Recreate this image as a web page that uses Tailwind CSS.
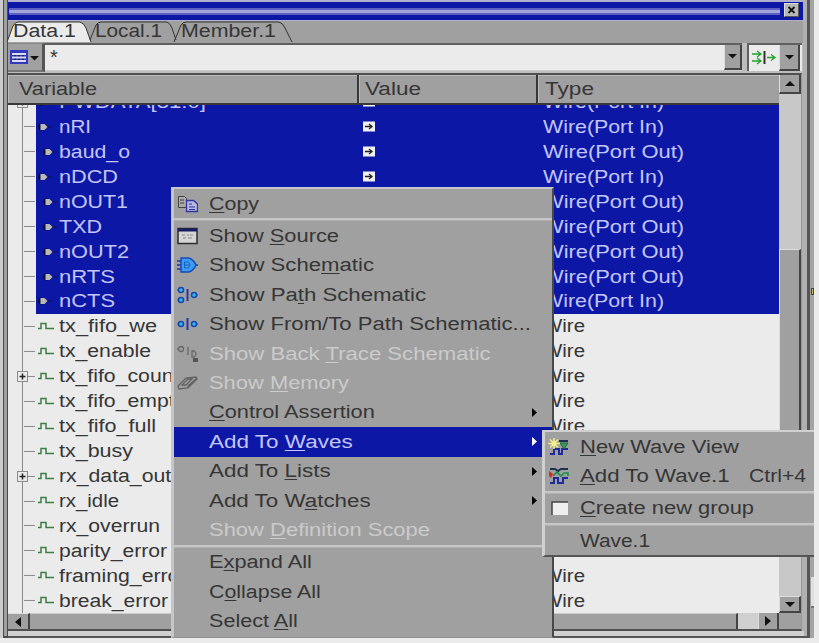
<!DOCTYPE html>
<html lang="en"><head><meta charset="utf-8"><title>Signal list</title>
<script src="https://cdn.jsdelivr.net/npm/@tailwindcss/browser@4"></script></head>
<body class="w-[819px] h-[643px] overflow-hidden bg-[#ebebeb] relative text-[18px] leading-none text-[#363636] [font-family:'Liberation_Sans',Arial,sans-serif]">
<div class="flex w-[814px] h-[638px] bg-[#b0b0b0]">
  <div class="w-[3px] bg-[#cccccc]"></div>
  <div class="w-[5px] bg-[#a0a0a0] border-x border-b-2 border-[#4a4a4a]"></div>
  <div class="w-[799px] flex flex-col border-b-2 border-[#555]">
    <header class="h-[21px] shrink-0 flex bg-[#0d17a5] border-t-2 border-b border-[#b0b0cc] w-[795px] pl-px">
      <div class="mt-[6px] h-[7px] w-[771px] bg-[#a3a6dc] border-y-2 border-[#5a5fc0]"></div>
      <button class="ml-[4px] mt-px w-[15px] h-[14px] bg-[#b8b8b8] border border-t-[#ddd] border-l-[#ddd] border-r-[#555] border-b-[#555] flex items-center justify-center">
        <svg width="9" height="8" viewBox="0 0 9 8"><path d="M1.5 1l6 6M7.5 1l-6 6" stroke="#111" stroke-width="1.8"/></svg></button>
    </header>
    <nav class="h-[22px] shrink-0 bg-[#a0a0a0] relative w-[795px] flex items-start pt-px">
      <svg class="absolute left-[-2px] top-0" width="292" height="22" viewBox="6 21 292 22" fill="none" stroke="#333">
        <path d="M7 42L13 26Q15 22 18 22H80Q84 23 86 28L91 42" fill="#ebebeb"/>
        <path d="M90 40L96 25Q98 22 101 22H167Q170 23 172 28L176 40M174 42L181 25Q183 22 186 22H279Q283 23 285 28L292 42"/></svg>
      <span class="relative ml-[5px] w-[82px]"><span data-w="63">Data.1</span></span>
      <span class="relative w-[86px]"><span data-w="67">Local.1</span></span>
      <span class="relative"><span data-w="95">Member.1</span></span>
    </nav>
    <div class="h-[30px] shrink-0 w-[795px] flex bg-[#bdbdbd]">
      <button class="w-[37px] h-[29px] bg-[#a0a0a0] border-t border-[#888] border-r-3 border-r-[#555] border-b-2 border-b-[#777] flex items-center pl-[2px]">
        <svg width="30" height="15" viewBox="0 0 30 15"><rect width="18" height="14" fill="#3139bd"/><path d="M2 4h14M2 7.5h14M2 11h14" stroke="#dcdcf5" stroke-width="2"/><path d="M4 5.7h2M8 5.7h2M12 5.7h2M4 9.3h2M8 9.3h2M12 9.3h2" stroke="#222"/><path d="M20 6h9l-4.500 4.500z" fill="#111"/></svg></button>
      <div class="w-[697px] h-[28px] flex border-t-2 border-[#606060] bg-[#ebebeb] border-b border-b-[#ccc]">
        <span class="w-[679px] pl-[5px] pt-[2px] text-[20px]">*</span>
        <button class="w-[18px] bg-[#a0a0a0] border-l border-[#ddd] border-r-2 border-r-[#444] border-b-2 border-b-[#444] flex items-center justify-center"><svg width="9" height="5"><path d="M0 0h9l-4.500 4.500z" fill="#111"/></svg></button>
      </div>
      <div class="w-[55px] ml-[5px] h-[28px] flex bg-[#ebebeb] border-t-2 border-l-2 border-[#606060]">
        <svg class="ml-[3px] mt-[5px]" width="25" height="15" viewBox="0 0 25 15" fill="none" stroke="#22a32b" stroke-width="1.3"><path d="M0 4h9M0 11h9M5 1l4 3-4 3M5 8l4 3-4 3M15 7.500h8M19 4.500l4 3-4 3"/><path d="M12.500 1v13" stroke="#333" stroke-width="2"/></svg>
        <button class="ml-[2px] w-[21px] bg-[#a0a0a0] border-l border-[#ddd] border-r-2 border-r-[#444] border-b-2 border-b-[#444] flex items-center justify-center"><svg width="9" height="5"><path d="M0 0h9l-4.500 4.500z" fill="#111"/></svg></button>
      </div>
    </div>
    <div class="h-[558px] w-[794px] shrink-0 flex flex-col border-t-2 border-b-2 border-[#505050] border-r border-r-[#999]">
      <div class="h-[538px] flex">
        <div class="w-[771px] flex flex-col">
          <div class="h-[30px] flex bg-[#a0a0a0] border-b-2 border-[#383838] shrink-0">
            <div class="w-[351px] border-r-2 border-[#383838] pl-[11px] pt-[5px] shadow-[inset_1px_1px_#bbb]"><span data-w="78">Variable</span></div>
            <div class="w-[179px] border-r-2 border-[#383838] pl-[6px] pt-[5px] shadow-[inset_1px_1px_#bbb]"><span data-w="56">Value</span></div>
            <div class="grow pl-[7px] pt-[5px] shadow-[inset_1px_1px_#bbb]"><span data-w="49">Type</span></div>
          </div>
          <div class="h-[508px] overflow-hidden bg-[#ebebeb]"><div id="rows" class="mt-[-15.500px]"></div></div>
        </div>
        <div class="w-[22px] flex flex-col bg-[#c8c8c8]">
          <button class="h-[19px] bg-[#a0a0a0] border-l border-[#ddd] border-r-2 border-r-[#444] border-b-2 border-b-[#444] flex items-center justify-center"><svg width="10" height="5"><path d="M0 5h10l-5-5z" fill="#111"/></svg></button>
          <div class="grow pt-[155px]"><div class="h-full bg-[#a0a0a0] border-t border-l border-[#ddd] border-r-2 border-r-[#444]"></div></div>
          <div class="h-[39px] bg-[#c8c8c8]"></div>
          <button class="h-[17px] bg-[#a0a0a0] border-l border-t border-[#ddd] border-r-2 border-r-[#444] border-b-2 border-b-[#444] flex items-center justify-center"><svg width="10" height="5"><path d="M0 0h10l-5 5z" fill="#111"/></svg></button>
        </div>
      </div>
      <div class="h-[16px] flex bg-[#a0a0a0]">
        <button class="w-[22px] border-r-2 border-[#444] border-t border-t-[#ddd] flex items-center justify-center"><svg width="6" height="10"><path d="M6 0v10l-6-5z" fill="#111"/></svg></button>
        <div class="w-[708px] border-t border-[#ccc] border-r-2 border-r-[#444]"></div>
        <div class="w-[20px] bg-[#d0d0d0]"></div>
        <button class="w-[21px] border-r-2 border-[#444] border-l border-l-[#ddd] flex items-center justify-center"><svg width="6" height="10"><path d="M0 0v10l6-5z" fill="#111"/></svg></button>
      </div>
    </div>
    <div class="grow bg-[#d0d0d0] w-[796px]"></div>
  </div>
  <div class="w-[3px] bg-[#555]"></div><div class="w-[4px] bg-[#a4a4a4]"></div>
</div>
<div class="absolute left-[811px] top-[288px] w-[3px] h-[7px] bg-[#c5bc62] border border-[#444]"></div>
<div class="absolute left-[811px] top-[577px] w-[3px] h-[31px] bg-[#e0e0e0] border-b-2 border-[#777]"></div>

<section id="menu" class="absolute left-[171px] top-[187px] w-[383px] h-[451px] bg-[#a0a0a0] border-t-2 border-l-3 border-[#c5c5cc] border-r-2 border-r-[#484848] border-b border-b-[#909090]"></section>
<section id="sub" class="absolute left-[542px] top-[430px] w-[272px] h-[127px] bg-[#a0a0a0] border-t-2 border-l-3 border-[#d0d0d0] border-b-2 border-b-[#555]"></section>

<script>
const raw=(s,w)=>`<span ${w?`data-w="${w}"`:'data-s="1.18"'}>${s}</span>`;
const txt=(s,w)=>raw(s.replace(/_(\w)_/,'<u class="underline decoration-1 underline-offset-2">$1</u>'),w);
const rows=[['PWDATA[31:0]',147,'i'],['nRI',32,'i'],['baud_o',71,'o'],['nDCD',59,'i'],['nOUT1',69,'o'],['TXD',43,'o'],['nOUT2',70,'o'],['nRTS',56,'o'],['nCTS',56,'i'],
['tx_fifo_we',98],['tx_enable',92],['tx_fifo_count',0,'+'],['tx_fifo_empty',0],['tx_fifo_full',97],['tx_busy',74],['rx_data_out',0,'+'],['rx_idle',60],['rx_overrun',101],['parity_error',108],['framing_error',0],['break_error',109]];
document.getElementById('rows').innerHTML=rows.map(([n,w,k],i)=>{
 const sel=i<9;
 const tree=`<svg class="shrink-0 w-[28px] h-full ${sel?'bg-[#ebebeb]':''}" viewBox="0 0 28 25" fill="none" stroke="#8a8a8a"><path d="M14.500 0V25M16 12.500h11"/>${k=='+'||i==0?'<rect x="9.500" y="7.500" width="10" height="10" fill="#ebebeb"/><path d="M11.500 12.500h6M14.500 9.500v6" stroke="#222" stroke-width="1.500"/>':''}</svg>`;
 const icon=sel?`<svg class="${k=='o'?'ml-[7px]':'ml-[2px]'}" width="14" height="10" viewBox="0 0 14 10"><path d="M0 5h14" stroke="#101048"/><rect x="0.500" y="1.500" width="5" height="7" rx="2" fill="#0c0c30"/><path d="M2.500 2h4l3 3-3 3h-4z" fill="#b9b9b9"/></svg>`
  :'<svg class="ml-[2px]" width="17" height="9" viewBox="0 0 17 9"><path d="M0 6.500h3v-5h5v5h8" fill="none" stroke="#3b7f42" stroke-width="1.500"/></svg>';
 return `<div class="h-[24.950px] flex items-center ${sel?'bg-[#0d17a5] text-[#c3c6fa]':''}">${tree}<div class="w-[23px] shrink-0 flex">${icon}</div><div class="w-[304px] shrink-0">${raw(n,w)}</div><div class="w-[180px] shrink-0">${sel?'<svg width="12" height="11"><rect width="12" height="10" y=".5" fill="#f0f0f0"/><path d="M2 5.500h7M6 3l3 2.500L6 8" fill="none" stroke="#222" stroke-width="1.300"/></svg>':''}</div><div>${sel?(k=='i'?raw('Wire(Port In)',121):raw('Wire(Port Out)',141)):raw('Wire',42)}</div></div>`}).join('');
const ic={
copy:'<path d="M1.500 1.500h6l2 2v9h-8z" fill="#aaa" stroke="#444"/><path d="M3 5h4M3 8h4" stroke="#444"/><path d="M9.500 5.500h7l4 3.500v7.500h-11z" fill="#b8b8df" stroke="#3036a0" stroke-width="1.300"/><path d="M12 9h3M12 12h6M12 14.500h6" stroke="#3036a0"/>',
src:'<rect x="1" y="1.500" width="19" height="15" fill="#d5d5d5" stroke="#2c2c2c" stroke-width="1.500"/><path d="M1 3h19" stroke="#171b60" stroke-width="3"/><path d="M5 8h3m2 0h2m1 0h3M6 11h3m2 0h4" stroke="#888"/>',
sch:'<path d="M0 5h5M0 9h5M0 13h5M16 9h5" stroke="#2030a8" stroke-width="1.500"/><path d="M4 2h8q5 2 7 7-2 5-7 7H4z" fill="#3c9bf2" stroke="#1a4ab8" stroke-width="1.500"/><path d="M7.500 6h4q3 3 0 6h-4zM8 9h4" fill="none" stroke="#1d62bd"/>',
path:'<path d="M10.500 3v12" stroke="#2a35a8" stroke-width="2"/><g fill="#35b8ec" stroke="#1747b0" stroke-width="1.500"><circle cx="4" cy="4" r="2.500"/><circle cx="4" cy="14" r="2.500"/><circle cx="17" cy="9" r="2.500"/></g><path d="M0 4h2M0 14h2M19 9h2" stroke="#1747b0"/>',
ft:'<path d="M10.500 3v12" stroke="#2a35a8" stroke-width="2"/><g fill="#35b8ec" stroke="#1747b0" stroke-width="1.500"><circle cx="4" cy="9" r="2.500"/><circle cx="17" cy="9" r="2.500"/></g><path d="M0 9h2M19 9h2" stroke="#1747b0"/>',
bt:'<g fill="none" stroke="#666" stroke-width="1.300"><circle cx="4" cy="4" r="2.500"/><path d="M0 4h2M11 2v8M15 6v6h2q4-3 0-6z"/></g><rect x="16" y="13" width="5" height="4" fill="#555"/>',
mem:'<path d="M1 12l8-8 10-1 1 2-9 9-9 1zM5 11l6-6h4l-6 6zM13 12v-2M16 9V7M11 14v-2l9-8" fill="none" stroke="#636363" stroke-width="1.300"/>',
nw:'<path d="M2 16h4v-5h5v5h3v-5h6" stroke="#1f2a9c" stroke-width="2" fill="none"/><path d="M11 3h9" stroke="#1d3050" stroke-width="2"/><path d="M12 5h8l-4 6z" fill="#3f9a58" stroke="#176c38"/><path d="M6 0v11M0 5.500h12M2 1.500l8 8M10 1.500l-8 8" stroke="#f0e884" stroke-width="1.600"/><circle cx="6" cy="5.500" r="2.500" fill="#f5ee90"/>',
aw:'<path d="M2 16h4v-5h4v5h5v-5h5" stroke="#1f2a9c" stroke-width="2" fill="none"/><path d="M2 2h5l3 2 3-2h7" stroke="#1d3050" stroke-width="2" fill="none"/><path d="M5 9l4-4 4 4 3-3h4v3" stroke="#189245" stroke-width="1.600" fill="none"/><path d="M1 4l4 3-2 4-2-2z" fill="#d22c26"/>',
cb:'<rect x="4" y="3" width="16" height="13" fill="#efefef"/><path d="M4 16V3h16" fill="none" stroke="#444" stroke-width="1.500"/>'};
const sep='<div class="h-[3px] bg-[#c6c6c6] border-b border-[#b0b0b0]"></div>';
const item=([t,w,i,f,extra])=>t=='-'?sep:`<div class="h-[29.400px] flex items-center ${f=='h'?'bg-[#0d17a5] text-[#c3c6fa]':f=='d'?'text-[#cbcbcb]':''}"><svg class="ml-[3px] w-[21px] h-[18px] shrink-0" viewBox="0 0 21 18">${ic[i]||''}</svg><div class="ml-[11px] w-0 grow">${txt(t,w)}</div>${f=='h'||f=='a'?`<svg class="mr-[15px] ${f=='h'?'text-white':'text-black'}" width="5" height="9"><path d="M0 0v9l5-4.500z" fill="currentColor"/></svg>`:''}${extra||''}</div>`;
document.getElementById('menu').innerHTML=[['_C_opy',50,'copy'],['-'],['Show _S_ource',130,'src'],['Show Sche_m_atic',165,'sch'],['Show Pa_t_h Schematic',217,'path'],['Show From/To Path Schematic...',322,'ft'],['Show Back _T_race Schematic',282,'bt','d'],['Show _M_emory',140,'mem','d'],['_C_ontrol Assertion',167,'','a'],['Add To _W_aves',144,'','h'],['Add To _L_ists',122,'','a'],['Add To W_a_tches',162,'','a'],['Show _D_efinition Scope',221,'','d'],['-'],['E_x_pand All',104],['C_o_llapse All',113],['Select _A_ll',90]].map(item).join('');
document.getElementById('sub').innerHTML=[['_N_ew Wave View',159,'nw'],['_A_dd To Wave.1',150,'aw','','<div class="w-[65px]">'+raw('Ctrl+4',57)+'</div>'],['-'],['_C_reate new group',174,'cb'],['-'],['Wave.1',70]].map(item).join('');
const ctx=document.createElement('canvas').getContext('2d');
ctx.font='18px "Liberation Sans", Arial, sans-serif';
document.querySelectorAll('[data-w],[data-s]').forEach(e=>{
 e.style.display='inline-block';e.style.whiteSpace='nowrap';e.style.transformOrigin='0 50%';
 e.style.transform=`scaleX(${e.dataset.s||e.dataset.w/ctx.measureText(e.textContent).width})`;
});
</script>
</body></html>
